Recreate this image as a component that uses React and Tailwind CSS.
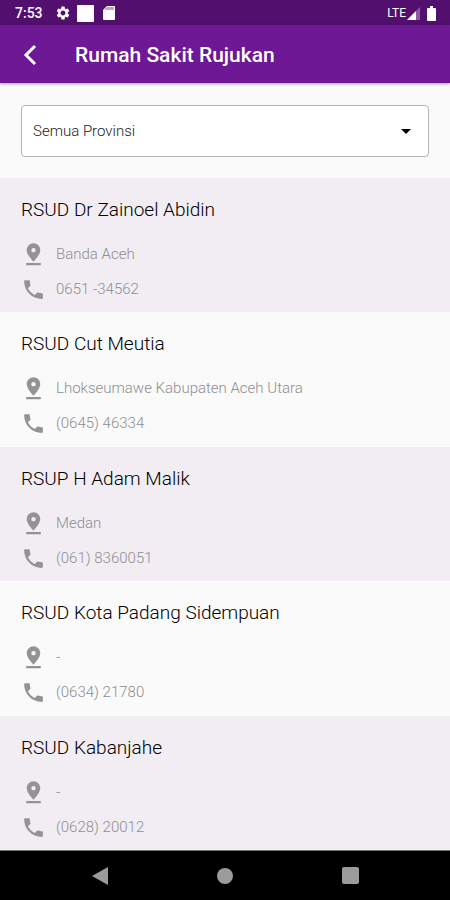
import React from 'react';
import { MdSettings, MdArrowDropDown } from 'react-icons/md';

const hospitals = [
  { name: 'RSUD Dr Zainoel Abidin', city: 'Banda Aceh', phone: '0651 -34562' },
  { name: 'RSUD Cut Meutia', city: 'Lhokseumawe Kabupaten Aceh Utara', phone: '(0645) 46334' },
  { name: 'RSUP H Adam Malik', city: 'Medan', phone: '(061) 8360051' },
  { name: 'RSUD Kota Padang Sidempuan', city: '-', phone: '(0634) 21780' },
  { name: 'RSUD Kabanjahe', city: '-', phone: '(0628) 20012' },
];

const PinIcon = () => (
  <svg viewBox="0 0 24 24" className="size-[25px] shrink-0 text-[#949296]" fill="currentColor">
    <path d="M18.500 7.800C18.500 4.200 15.600 1.300 12 1.300S5.500 4.200 5.500 7.800C5.500 12.400 12 18.800 12 18.800s6.500-6.400 6.500-11zM9.900 7.800a2.100 2.100 0 1 1 4.200 0 2.100 2.100 0 0 1-4.200 0zM5 20.200v2h14v-2z" />
  </svg>
);

const PhoneIcon = () => (
  <svg viewBox="0 0 24 24" className="size-[25px] shrink-0 text-[#949296]" fill="currentColor">
    <path d="M6.620 10.790c1.440 2.830 3.760 5.140 6.590 6.590l2.200-2.200c.27-.27.67-.36 1.020-.24 1.120.37 2.330.57 3.570.57.55 0 1 .45 1 1V20c0 .55-.45 1-1 1C10.610 21 3 13.390 3 4c0-.55.45-1 1-1h3.500c.55 0 1 .45 1 1 0 1.250.2 2.450.57 3.570.11.35.03.74-.25 1.020z" />
  </svg>
);

const StatusBar = () => (
  <div className="flex h-[25px] items-center justify-between bg-[#520f6d] pt-px pr-[14px] pl-[15px] text-white">
    <div className="flex items-center">
      <span className="text-[14px] leading-5 font-medium">7:53</span>
      <MdSettings className="ml-3 size-4" />
      <span className="ml-[6px] size-[17px] rounded-[1px] bg-white" />
      {/* SD card */}
      <svg viewBox="0 0 12 14" className="ml-[9px] h-[14px] w-3">
        <path d="M4 0h7a1 1 0 0 1 1 1v12a1 1 0 0 1-1 1H1a1 1 0 0 1-1-1V4z" fill="#fff" />
        <path d="M4 1h7v3H2V3z" fill="#bda5c7" />
      </svg>
    </div>
    <div className="flex items-center">
      <span className="text-[12px] leading-4">LTE</span>
      <svg viewBox="0 0 13 13" className="ml-px size-[13px]">
        <path d="M13 0v13H0z" fill="#8a5b9d" />
        <path d="M9 4v9H0z" fill="#fff" />
      </svg>
      <svg viewBox="0 0 9 15" className="ml-[7px] h-[15px] w-[9px]" fill="#fff">
        <path d="M3 0h3v2h2a1 1 0 0 1 1 1v11a1 1 0 0 1-1 1H1a1 1 0 0 1-1-1V3a1 1 0 0 1 1-1h2z" />
      </svg>
    </div>
  </div>
);

const AppBar = () => (
  <header className="z-10 flex h-[58px] items-center bg-[#6f1895] pt-[2px] pl-[17px] text-white shadow-[0_1px_3px_rgba(0,0,0,0.35)]">
    <button type="button" aria-label="Kembali" className="flex size-[26px] items-center justify-center">
      <svg viewBox="0 0 14 22" className="h-[22px] w-[14px]" fill="none" stroke="currentColor" strokeWidth="3">
        <path d="M12 2 3 11l9 9" />
      </svg>
    </button>
    <h1 className="ml-8 text-[21px] leading-7 font-medium">Rumah Sakit Rujukan</h1>
  </header>
);

const ProvinceFilter = () => (
  <div className="px-[21px] pt-[22px] pb-[21px]">
    <div className="relative">
      <select
        aria-label="Provinsi"
        className="h-[52px] w-full appearance-none rounded-[4px] border border-[#b5b5b5] bg-white pr-10 pl-[11px] text-[15px] font-light text-[#222]"
      >
        <option>Semua Provinsi</option>
      </select>
      <MdArrowDropDown className="pointer-events-none absolute top-[14px] right-[11px] size-6 text-black" />
    </div>
  </div>
);

const HospitalItem = ({ name, city, phone }) => (
  <li className="px-[21px] pt-5 pb-[9px] odd:bg-[#f1edf3]">
    <h2 className="text-[19px] leading-6 font-light text-black">{name}</h2>
    <div className="mt-5 flex items-center gap-[10px] text-[15px] leading-[25px] font-light text-[#8f8d91]">
      <PinIcon />
      <span>{city}</span>
    </div>
    <div className="mt-[10px] flex items-center gap-[10px] text-[15px] leading-[25px] font-light text-[#8f8d91]">
      <PhoneIcon />
      <span>{phone}</span>
    </div>
  </li>
);

const NavigationBar = () => (
  <nav className="grid h-[50px] grid-cols-3 items-center border-t border-[#777] bg-black px-[37px] text-[#9b9b9b]">
    <button type="button" aria-label="Kembali" className="flex justify-center">
      <svg viewBox="0 0 16 18" className="h-[18px] w-4" fill="currentColor">
        <path d="M16 0v18L0 9z" />
      </svg>
    </button>
    <button type="button" aria-label="Beranda" className="flex justify-center">
      <span className="size-4 rounded-full bg-current" />
    </button>
    <button type="button" aria-label="Aplikasi terbaru" className="flex justify-center">
      <span className="size-[17px] rounded-[2px] bg-current" />
    </button>
  </nav>
);

const App = () => (
  <div className="flex min-h-screen flex-col bg-[#fafafa] font-[Roboto,sans-serif]">
    <StatusBar />
    <AppBar />
    <main className="flex flex-1 flex-col">
      <ProvinceFilter />
      <ul className="grid flex-1 auto-rows-fr">
        {hospitals.map((hospital) => (
          <HospitalItem key={hospital.name} {...hospital} />
        ))}
      </ul>
    </main>
    <NavigationBar />
  </div>
);

export default App;
